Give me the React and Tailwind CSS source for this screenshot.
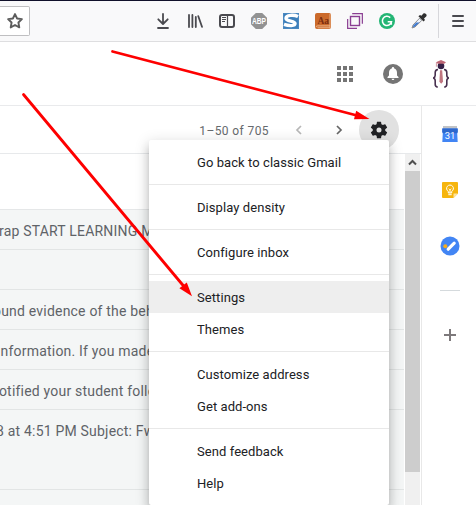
import React from "react";

function Star() {
  return (
    <svg width="18" height="18" viewBox="0 0 18 18" fill="none" stroke="#5c5c5c" strokeWidth="1.9" strokeLinejoin="round">
      <path d="M9 2.1 11.1 6.5 15.9 7.1 12.4 10.5 13.3 15.4 9 13 4.7 15.4 5.6 10.5 2.1 7.1 6.9 6.5Z" />
    </svg>
  );
}

function DownloadIcon() {
  return (
    <svg width="16" height="16" viewBox="0 0 16 16" fill="none" stroke="#4a4a4f" strokeWidth="1.8" strokeLinecap="round" strokeLinejoin="round">
      <path d="M8 1v9.5M3.3 6.3 8 11l4.7-4.7M3 15h10" />
    </svg>
  );
}

function LibraryIcon() {
  return (
    <svg width="16" height="16" viewBox="0 0 16 16" fill="none" stroke="#4a4a4f" strokeLinecap="round">
      <path d="M2 2v12M5.4 2v12M8.8 4v10M11.3 3.2 15 13.8" strokeWidth="1.8" />
    </svg>
  );
}

function SidebarIcon() {
  return (
    <svg width="16" height="16" viewBox="0 0 16 16" fill="none" stroke="#4a4a4f">
      <rect x="1" y="2" width="14" height="12" rx="2" strokeWidth="2" />
      <path d="M8.5 2v12" strokeWidth="1.2" />
      <path d="M3 4.5h4M3 6.5h4M3 8.5h3" strokeWidth="1" />
    </svg>
  );
}

function AbpIcon() {
  return (
    <svg width="16" height="16" viewBox="0 0 16 16">
      <path d="M4.8 0h6.4L16 4.8v6.4L11.2 16H4.8L0 11.2V4.8Z" fill="#929292" />
      <text x="8" y="11" textAnchor="middle" textLength="14" lengthAdjust="spacingAndGlyphs" fontFamily="Liberation Sans, sans-serif" fontWeight="700" fontSize="8.4" fill="#fff">ABP</text>
    </svg>
  );
}

function SIcon() {
  return (
    <svg width="16" height="16" viewBox="0 0 16 16">
      <rect x=".5" y=".5" width="15" height="15" fill="#3d7fba" stroke="#4a88c0" />
      <path d="M15 3.6C11 1.6 3 1.8 3 5.2c0 3.5 9 2.4 9 5.4 0 2.5-6 2.5-11 .8" fill="none" stroke="#fff" strokeWidth="3.4" />
    </svg>
  );
}

function DictionaryIcon() {
  return (
    <svg width="16" height="16" viewBox="0 0 16 16">
      <rect width="16" height="16" rx="2" fill="#cb6a2b" />
      <path d="M1 14.2c0-.9.5-1.3 1.4-1.3H15M15 1v13.8H2.5" fill="none" stroke="#f3c5a0" strokeWidth=".8" />
      <text x="8.3" y="11" textAnchor="middle" fontFamily="Liberation Serif, serif" fontWeight="700" fontSize="9.5" fill="#7b2d10">Aa</text>
    </svg>
  );
}

function FramesIcon() {
  return (
    <svg width="16" height="16" viewBox="0 0 16 16" fill="none" stroke="#8b3f93" strokeWidth="1.2">
      <path d="M5.2.65h10.15v10.1" />
      <rect x="3.5" y="3.5" width="9" height="9" strokeWidth="1.4" />
      <path d="M.65 6v9.35H10" />
    </svg>
  );
}

function GrammarIcon() {
  return (
    <svg width="16" height="16" viewBox="0 0 16 16" fill="none" stroke="#fff" strokeWidth="1.6">
      <circle cx="8" cy="8" r="8" fill="#23b574" stroke="none" />
      <path d="M11.2 4.6A4.6 4.6 0 1 0 12.5 8.7H8.7M12.3 8.5v3.2" />
    </svg>
  );
}

function DropperIcon() {
  return (
    <svg width="16" height="16" viewBox="0 0 16 16">
      <path d="M1 15 2 12 8.6 5.2 10.8 7.4 4 14Z" fill="#edf2fb" stroke="#777" strokeWidth=".8" />
      <path d="M1.8 14.2 2.6 12.2 5.3 9.4h3L3.8 13.7Z" fill="#3c78cf" />
      <path d="m7.4 3.2 1.6-1.3 1.4.9L12.4.6c1.6-1.4 4.3 1.2 2.8 2.8L13 5.6l1 1.3-1.5 1.6Z" fill="#303030" />
    </svg>
  );
}

function Extensions() {
  return (
    <div className="flex items-center gap-4">
      <DownloadIcon />
      <LibraryIcon />
      <SidebarIcon />
      <AbpIcon />
      <SIcon />
      <DictionaryIcon />
      <FramesIcon />
      <GrammarIcon />
      <DropperIcon />
    </div>
  );
}

function BrowserBar() {
  return (
    <div className="flex h-[42px] items-start justify-between border-t border-b border-t-[#11112b] border-b-[#dedee0] bg-[#f9f9fa]">
      <div className="mt-[5px] flex h-[30px] w-[30px] items-center justify-center rounded-r-xs border border-l-0 border-[#bfbfc1] bg-white">
        <Star />
      </div>
      <div className="flex h-10 items-center">
        <Extensions />
        <div className="ml-[11px] h-[34px] w-px bg-[#d7d7db]" />
        <svg className="mr-3 ml-[13px]" width="12" height="12" viewBox="0 0 12 12" stroke="#4a4a4f" strokeWidth="2" strokeLinecap="round">
          <path d="M1 1h10M1 6h10M1 11h10" />
        </svg>
      </div>
    </div>
  );
}

function Avatar() {
  return (
    <svg width="18" height="30" viewBox="0 0 18 30" fill="none">
      <circle cx="9" cy="7" r="3.3" fill="#352047" />
      <path d="M4 3.2 9 1l5 2.2-1.8 1.5H5.8Z" fill="#bd6675" />
      <path d="M4.4 3.5v4.2" stroke="#c98590" strokeWidth=".8" />
      <path d="m8 11.2h2.2l.8 11.5-1.8 2-1.8-2Z" fill="#c07580" />
      <path d="M6 10.5c-2.2.2-2.8 1-2.8 3v2.8c0 1.7-.7 2.4-2 2.7 1.3.3 2 1 2 2.7v3.5c0 1.9.7 2.7 2.5 2.9M12 10.5c2.2.2 2.8 1 2.8 3v2.8c0 1.7.7 2.4 2 2.7-1.3.3-2 1-2 2.7v3.5c0 1.9-.7 2.7-2.5 2.9" stroke="#48304f" strokeWidth="1.6" />
    </svg>
  );
}

function AccountBar() {
  return (
    <div className="flex h-16 items-center justify-end border-b border-[#e9eaec] pr-[26px]">
      <svg width="16" height="16" viewBox="0 0 16 16" fill="#757575">
        <path d="M0 0h4v4H0zM6 0h4v4H6zM12 0h4v4h-4zM0 6h4v4H0zM6 6h4v4H6zM12 6h4v4h-4zM0 12h4v4H0zM6 12h4v4H6zM12 12h4v4h-4z" />
      </svg>
      <svg className="ml-[30px]" width="20" height="20" viewBox="0 0 20 20">
        <circle cx="10" cy="10" r="10" fill="#757575" />
        <path d="M4.5 14v-1L6 11.4V8.7c0-2 1-3.6 2.8-4.1v-.3a1.2 1.2 0 0 1 2.4 0v.3C13 5.1 14 6.7 14 8.7v2.7l1.5 1.6v1ZM8.6 14.8h2.8c0 1.7-2.8 1.7-2.8 0Z" fill="#fff" />
      </svg>
      <div className="ml-[29px]">
        <Avatar />
      </div>
    </div>
  );
}

function Chevron({ d, color }) {
  return (
    <svg width="20" height="20" viewBox="0 0 20 20" fill="none" stroke={color} strokeWidth="1.7">
      <path d={d} />
    </svg>
  );
}

function Pager() {
  return (
    <div className="flex h-12 items-center border-b border-[#e7e9eb] pr-[22px]">
      <span className="ml-auto pt-0.5 text-xs tracking-[0.4px] whitespace-nowrap text-[#666a6d]">1–50 of 705</span>
      <div className="ml-5 flex gap-5">
        <Chevron d="M12 6 8 10l4 4" color="#b7b7b7" />
        <Chevron d="m8 6 4 4-4 4" color="#666" />
      </div>
      <div className="ml-2.5 flex h-10 w-10 shrink-0 items-center justify-center rounded-full bg-[#e1e1e1]">
        <svg width="20" height="20" viewBox="0 0 24 24" fill="#202124">
          <path d="M19.43 12.98c.04-.32.07-.64.07-.98s-.03-.66-.07-.98l2.11-1.65c.19-.15.24-.42.12-.64l-2-3.46c-.12-.22-.39-.3-.61-.22l-2.49 1c-.52-.4-1.08-.73-1.69-.98l-.38-2.65A.488.488 0 0 0 14 2h-4c-.25 0-.46.18-.49.42l-.38 2.65c-.61.25-1.17.59-1.69.98l-2.49-1c-.23-.09-.49 0-.61.22l-2 3.46c-.13.22-.07.49.12.64l2.11 1.65c-.04.32-.07.65-.07.98s.03.66.07.98l-2.11 1.65c-.19.15-.24.42-.12.64l2 3.46c.12.22.39.3.61.22l2.49-1c.52.4 1.08.73 1.69.98l.38 2.65c.03.24.24.42.49.42h4c.25 0 .46-.18.49-.42l.38-2.65c.61-.25 1.17-.59 1.69-.98l2.49 1c.23.09.49 0 .61-.22l2-3.46c.12-.22.07-.49-.12-.64l-2.11-1.65ZM12 15a3 3 0 1 1 0-6 3 3 0 0 1 0 6Z" />
        </svg>
      </div>
    </div>
  );
}

function MailRow({ children, shift = "", size = "h-10" }) {
  return (
    <div className={`${size} shrink-0 overflow-hidden border-b border-[#e2e5e5] bg-[#f4f6f6] pt-[11px] text-sm leading-5 tracking-[0.2px] whitespace-nowrap text-[#5f6368]`}>
      <div className={shift}>{children}</div>
    </div>
  );
}

function MailList() {
  return (
    <div className="flex w-[404px] flex-col">
      <div className="h-14 shrink-0 border-b border-[#e5e7e8] bg-white" />
      <MailRow shift="-ml-px">rap START LEARNING MORE</MailRow>
      <MailRow />
      <MailRow shift="-ml-[7px]">ound evidence of the behavior</MailRow>
      <MailRow shift="-ml-[3px]">information. If you made this</MailRow>
      <MailRow shift="-ml-[9px]">notified your student followers</MailRow>
      <MailRow shift="-ml-[4px]" size="h-20">8 at 4:51 PM Subject: Fwd:</MailRow>
      <MailRow />
    </div>
  );
}

function Scrollbar() {
  return (
    <div className="ml-px w-[15px] bg-[#f0f0f0]">
      <div className="flex h-[17px] items-center justify-center">
        <svg width="9" height="7" viewBox="0 0 9 7" fill="none" stroke="#505050" strokeWidth="2">
          <path d="M1 5.5 4.5 2 8 5.5" />
        </svg>
      </div>
      <div className="h-[301px] bg-[#cdcdcd]" />
    </div>
  );
}

function SidePanel() {
  return (
    <aside className="flex w-[55px] flex-col items-center border-l border-[#e8e8e8] pt-5 pl-0.5">
      <svg className="shrink-0" width="16" height="16" viewBox="0 0 16 16">
        <path d="M1 0h14v4H1z" fill="#c1c3c6" />
        <path d="M.3 2.5h15.4V6l-.5 1 .5 9H.3L.8 7l-.5-1Z" fill="#4285f4" />
        <path d="M.3 2.5h15.4V6l-.5 1.2H.8L.3 6Z" fill="#2e68cd" />
        <text x="8" y="12.6" textAnchor="middle" fontFamily="Roboto, sans-serif" fontSize="9.5" fill="#fff">31</text>
      </svg>
      <svg className="mt-10 shrink-0" width="16" height="16" viewBox="0 0 16 16">
        <path d="M1 0h14q1 0 1 1v10.5L11.5 16H1q-1 0-1-1V1q0-1 1-1Z" fill="#f6b50d" />
        <path d="M11.5 11.5H16L11.5 16Z" fill="#fde5a1" />
        <path d="M6.3 11h3.4V9.4a3.4 3.4 0 1 0-3.4 0ZM6.3 12.7h3.4M6.8 6.7 8 7.9l1.2-1.2M8 8v3" fill="none" stroke="#fff" strokeWidth="1" />
      </svg>
      <svg className="mt-[38px] shrink-0" width="20" height="20" viewBox="0 0 20 20">
        <circle cx="10" cy="10" r="9.5" fill="#4285f4" />
        <path d="m8.2 13.2 6-6" stroke="#fff" strokeWidth="3.2" strokeLinecap="round" />
        <circle cx="5.3" cy="10.2" r="2" fill="#f6ac1d" />
      </svg>
      <div className="mt-[34px] h-px w-5 shrink-0 bg-[#d5dadd]" />
      <svg className="mt-[38px] shrink-0" width="12" height="12" viewBox="0 0 12 12" stroke="#7d797b" strokeWidth="2">
        <path d="M6 0v12M0 6h12" />
      </svg>
    </aside>
  );
}

const menuGroups = [
  ["Go back to classic Gmail"],
  ["Display density"],
  ["Configure inbox"],
  ["Settings", "Themes"],
  ["Customize address", "Get add-ons"],
  ["Send feedback", "Help"],
];

function SettingsMenu() {
  return (
    <div className="absolute top-[140px] left-[149px] w-60 divide-y divide-[#e8e8e8] rounded-xs bg-white text-[13px] tracking-[0.07px] text-[#202124] shadow-[0_8px_10px_1px_rgba(0,0,0,.14),0_3px_14px_2px_rgba(0,0,0,.12),0_5px_5px_-3px_rgba(0,0,0,.2)]">
      {menuGroups.map((group) => (
        <div key={group[0]} className="py-1.5">
          {group.map((item) => (
            <div key={item} className={`flex h-8 items-center pt-0.5 pl-12 ${item === "Settings" ? "bg-[#eeeeee]" : ""}`}>
              {item}
            </div>
          ))}
        </div>
      ))}
    </div>
  );
}

function Arrows() {
  return (
    <svg className="pointer-events-none absolute inset-0" width="476" height="505" viewBox="0 0 476 505" fill="#fe0000" stroke="#fe0000" strokeWidth="2.8" strokeLinecap="round">
      <path d="M112.5 51.5 357 115.5M23.5 94.5 184 286.5" />
      <path d="m369.5 119-13.3-8.3-2.2 8.5ZM192 296.3l-5.2-13.8-7.4 5.7Z" stroke="none" />
    </svg>
  );
}

export default function App() {
  return (
    <div className="relative h-[505px] w-[476px] overflow-hidden bg-white font-[Roboto,'Liberation_Sans',sans-serif]">
      <BrowserBar />
      <AccountBar />
      <div className="flex h-[399px]">
        <main className="flex w-[421px] flex-col">
          <Pager />
          <div className="flex h-[351px] overflow-hidden">
            <MailList />
            <Scrollbar />
          </div>
        </main>
        <SidePanel />
      </div>
      <SettingsMenu />
      <Arrows />
    </div>
  );
}
